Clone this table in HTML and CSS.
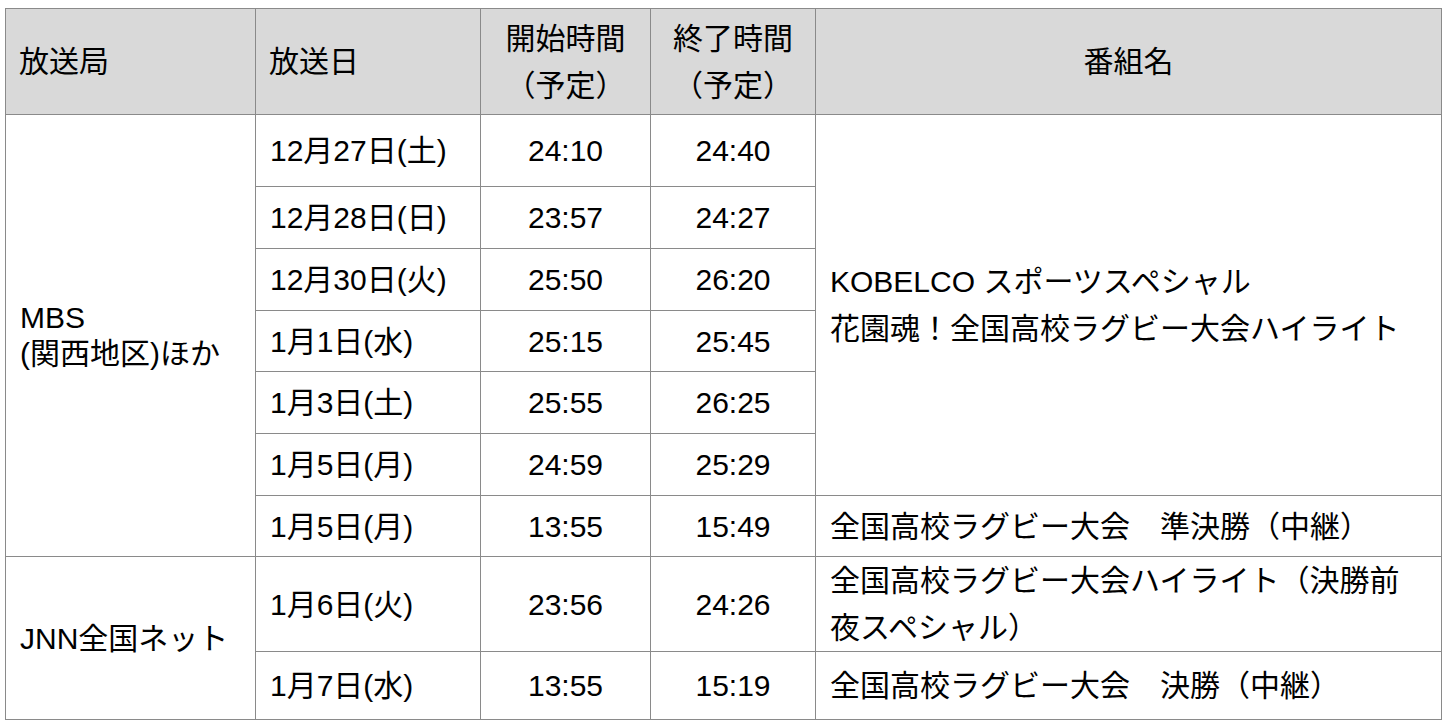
FILE: index.html
```html
<!DOCTYPE html>
<html lang="ja">
<head>
<meta charset="utf-8">
<title>放送予定</title>
<link rel="stylesheet" href="styles.css">
</head>
<body>
<div class="wrap">
<table class="sched">
  <colgroup>
    <col class="c-station">
    <col class="c-date">
    <col class="c-start">
    <col class="c-end">
    <col class="c-title">
  </colgroup>
  <thead>
    <tr class="r-head">
      <th class="left">放送局</th>
      <th class="left">放送日</th>
      <th>開始時間<br>（予定）</th>
      <th>終了時間<br>（予定）</th>
      <th>番組名</th>
    </tr>
  </thead>
  <tbody>
    <tr class="r-first">
      <td rowspan="7" class="station"><div class="tight">MBS<br>(関西地区)ほか</div></td>
      <td class="date">12月27日(土)</td>
      <td class="time">24:10</td>
      <td class="time">24:40</td>
      <td rowspan="6" class="title">KOBELCO スポーツスペシャル<br>花園魂！全国高校ラグビー大会ハイライト</td>
    </tr>
    <tr class="r-std">
      <td class="date">12月28日(日)</td>
      <td class="time">23:57</td>
      <td class="time">24:27</td>
    </tr>
    <tr class="r-std">
      <td class="date">12月30日(火)</td>
      <td class="time">25:50</td>
      <td class="time">26:20</td>
    </tr>
    <tr class="r-short">
      <td class="date">1月1日(水)</td>
      <td class="time">25:15</td>
      <td class="time">25:45</td>
    </tr>
    <tr class="r-std">
      <td class="date">1月3日(土)</td>
      <td class="time">25:55</td>
      <td class="time">26:25</td>
    </tr>
    <tr class="r-std">
      <td class="date">1月5日(月)</td>
      <td class="time">24:59</td>
      <td class="time">25:29</td>
    </tr>
    <tr class="r-short">
      <td class="date">1月5日(月)</td>
      <td class="time">13:55</td>
      <td class="time">15:49</td>
      <td class="title">全国高校ラグビー大会　準決勝（中継）</td>
    </tr>
    <tr class="r-double">
      <td rowspan="2" class="station">JNN全国ネット</td>
      <td class="date">1月6日(火)</td>
      <td class="time">23:56</td>
      <td class="time">24:26</td>
      <td class="title">全国高校ラグビー大会ハイライト（決勝前夜スペシャル）</td>
    </tr>
    <tr class="r-last">
      <td class="date">1月7日(水)</td>
      <td class="time">13:55</td>
      <td class="time">15:19</td>
      <td class="title">全国高校ラグビー大会　決勝（中継）</td>
    </tr>
  </tbody>
</table>
</div>
</body>
</html>
```

FILE: styles.css
```css
html, body {
  margin: 0;
  padding: 0;
  background: #ffffff;
}

.wrap {
  padding: 8px 6px 6px 5px;
}

.sched {
  border-collapse: collapse;
  table-layout: fixed;
  width: 1436px;
  font-family: "Liberation Sans", "Noto Sans CJK JP", sans-serif;
  font-size: 30px;
  color: #000000;
  line-height: 47px;
}

.c-station { width: 250px; }
.c-date { width: 225px; }
.c-start { width: 170px; }
.c-end { width: 165px; }
.c-title { width: 626px; }

.sched th,
.sched td {
  border: 1px solid #8a8a8a;
  padding: 0 14px;
  vertical-align: middle;
  font-weight: 400;
}

.sched th {
  background: #d9d9d9;
  text-align: center;
}

.sched th.left {
  text-align: left;
  padding-left: 13px;
}

.r-head { height: 106px; }
.r-first { height: 72px; }
.r-std { height: 62px; }
.r-short { height: 61px; }
.r-double { height: 93px; }
.r-last { height: 68px; }

.station {
  text-align: left;
  padding-left: 13px;
}

.tight {
  line-height: 36px;
}

.date {
  text-align: left;
}

.time {
  text-align: center;
}

.title {
  text-align: left;
}
```
